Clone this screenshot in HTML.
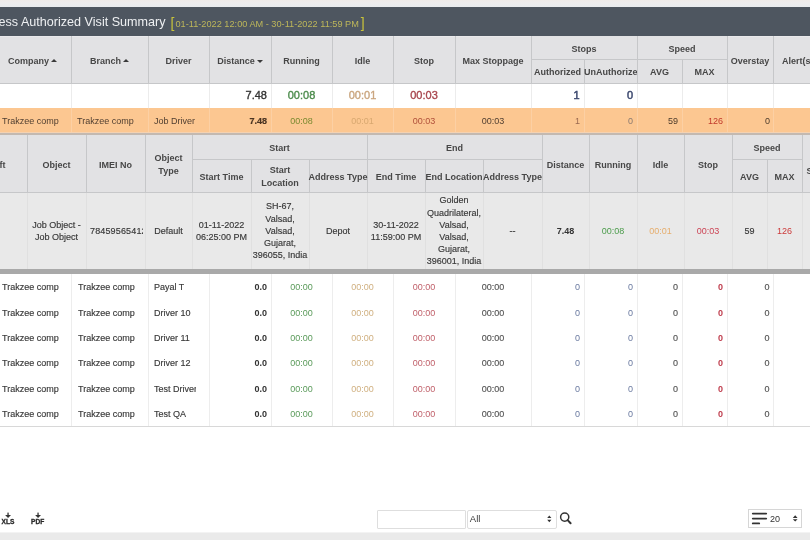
<!DOCTYPE html><html><head><meta charset="utf-8"><style>
html,body{margin:0;padding:0;width:810px;height:540px;overflow:hidden;background:#fff;position:relative}
body{font-family:"Liberation Sans",sans-serif;font-size:9px}
.c{position:absolute;display:flex;align-items:center;box-sizing:border-box;white-space:nowrap}
small{font-size:7px}
i.up,i.dn{display:inline-block;width:0;height:0;border-left:3px solid transparent;border-right:3px solid transparent;margin-left:2px;vertical-align:middle}
i.up{border-bottom:3.5px solid #3a3a3a;position:relative;top:-1px}
i.dn{border-top:3.5px solid #3a3a3a;position:relative;top:0px}
</style></head><body>
<div id="root" style="position:absolute;left:0;top:0;width:810px;height:540px;overflow:hidden;background:#fff;will-change:transform">
<div style="position:absolute;left:0;top:0;width:810px;height:7px;background:linear-gradient(#efebe9,#eeedee 40%,#e9ecef)"></div>
<div style="position:absolute;left:0px;top:7px;width:810px;height:29px;background:#4e5660"></div>
<div id="ttl" style="position:absolute;left:-33px;top:14px;white-space:nowrap;font-size:12.6px;color:#eef0f2;line-height:16px">Business <span id="A">Authorized Visit Summary</span></div>
<div style="position:absolute;left:170.6px;top:15px;white-space:nowrap;font-size:14px;color:#c7c23a;line-height:16px">[</div>
<div id="dt" style="position:absolute;left:175.5px;top:18px;white-space:nowrap;font-size:9.2px;color:#bdb65a;line-height:12px">01-11-2022 12:00 AM - 30-11-2022 11:59 PM</div>
<div style="position:absolute;left:360.8px;top:15px;white-space:nowrap;font-size:14px;color:#c7c23a;line-height:16px">]</div>
<div style="position:absolute;left:0px;top:36px;width:810px;height:47px;background:#e2e2e4"></div>
<div style="position:absolute;left:0px;top:36px;width:810px;height:1px;background:#e9e9eb"></div>
<div style="position:absolute;left:0px;top:83px;width:810px;height:1px;background:#c6c7c9"></div>
<div style="position:absolute;left:71px;top:36px;width:1px;height:48px;background:#c6c7c9"></div>
<div style="position:absolute;left:148px;top:36px;width:1px;height:48px;background:#c6c7c9"></div>
<div style="position:absolute;left:209px;top:36px;width:1px;height:48px;background:#c6c7c9"></div>
<div style="position:absolute;left:271px;top:36px;width:1px;height:48px;background:#c6c7c9"></div>
<div style="position:absolute;left:332px;top:36px;width:1px;height:48px;background:#c6c7c9"></div>
<div style="position:absolute;left:393px;top:36px;width:1px;height:48px;background:#c6c7c9"></div>
<div style="position:absolute;left:455px;top:36px;width:1px;height:48px;background:#c6c7c9"></div>
<div style="position:absolute;left:531px;top:36px;width:1px;height:48px;background:#c6c7c9"></div>
<div style="position:absolute;left:584px;top:36px;width:1px;height:48px;background:#c6c7c9"></div>
<div style="position:absolute;left:637px;top:36px;width:1px;height:48px;background:#c6c7c9"></div>
<div style="position:absolute;left:682px;top:36px;width:1px;height:48px;background:#c6c7c9"></div>
<div style="position:absolute;left:727px;top:36px;width:1px;height:48px;background:#c6c7c9"></div>
<div style="position:absolute;left:773px;top:36px;width:1px;height:48px;background:#c6c7c9"></div>
<div style="position:absolute;left:531px;top:59px;width:196px;height:1px;background:#c6c7c9"></div>
<div class="c" style="left:-6px;top:36px;width:77px;height:47px;justify-content:center;text-align:center;padding:0 0px;font-weight:bold;color:#474747;padding-top:2px;"><span>Company<i class=up></i></span></div>
<div class="c" style="left:71px;top:36px;width:77px;height:47px;justify-content:center;text-align:center;padding:0 0px;font-weight:bold;color:#474747;padding-top:2px;"><span>Branch<i class=up></i></span></div>
<div class="c" style="left:148px;top:36px;width:61px;height:47px;justify-content:center;text-align:center;padding:0 0px;font-weight:bold;color:#474747;padding-top:2px;"><span>Driver</span></div>
<div class="c" style="left:209px;top:36px;width:62px;height:47px;justify-content:center;text-align:center;padding:0 0px;font-weight:bold;color:#474747;padding-top:2px;"><span>Distance<i class=dn></i></span></div>
<div class="c" style="left:271px;top:36px;width:61px;height:47px;justify-content:center;text-align:center;padding:0 0px;font-weight:bold;color:#474747;padding-top:2px;"><span>Running</span></div>
<div class="c" style="left:332px;top:36px;width:61px;height:47px;justify-content:center;text-align:center;padding:0 0px;font-weight:bold;color:#474747;padding-top:2px;"><span>Idle</span></div>
<div class="c" style="left:393px;top:36px;width:62px;height:47px;justify-content:center;text-align:center;padding:0 0px;font-weight:bold;color:#474747;padding-top:2px;"><span>Stop</span></div>
<div class="c" style="left:455px;top:36px;width:76px;height:47px;justify-content:center;text-align:center;padding:0 0px;font-weight:bold;color:#474747;padding-top:2px;"><span>Max Stoppage</span></div>
<div class="c" style="left:531px;top:36px;width:196px;height:23px;justify-content:center;text-align:center;padding:0 0px;font-weight:bold;color:#474747;padding-top:2px;"><span></span></div>
<div class="c" style="left:531px;top:36px;width:106px;height:23px;justify-content:center;text-align:center;padding:0 0px;font-weight:bold;color:#474747;padding-top:2px;"><span>Stops</span></div>
<div class="c" style="left:637px;top:36px;width:90px;height:23px;justify-content:center;text-align:center;padding:0 0px;font-weight:bold;color:#474747;padding-top:2px;"><span>Speed</span></div>
<div class="c" style="left:531px;top:59px;width:53px;height:24px;justify-content:center;text-align:center;padding:0 0px;font-weight:bold;color:#474747;padding-top:2px;"><span>Authorized</span></div>
<div class="c" style="left:584px;top:59px;width:53px;height:24px;justify-content:flex-start;text-align:left;padding:0 0px;font-weight:bold;color:#474747;padding-top:2px;justify-content:flex-start;overflow:hidden;"><span>UnAuthorize</span></div>
<div class="c" style="left:637px;top:59px;width:45px;height:24px;justify-content:center;text-align:center;padding:0 0px;font-weight:bold;color:#474747;padding-top:2px;"><span>AVG</span></div>
<div class="c" style="left:682px;top:59px;width:45px;height:24px;justify-content:center;text-align:center;padding:0 0px;font-weight:bold;color:#474747;padding-top:2px;"><span>MAX</span></div>
<div class="c" style="left:727px;top:36px;width:46px;height:47px;justify-content:center;text-align:center;padding:0 0px;font-weight:bold;color:#474747;padding-top:2px;"><span>Overstay</span></div>
<div class="c" style="left:773px;top:36px;width:67px;height:47px;justify-content:flex-start;text-align:left;padding:0 0px;font-weight:bold;color:#474747;padding-top:2px;justify-content:flex-start;padding-left:9px"><span>Alert(s)</span></div>
<div style="position:absolute;left:532px;top:36px;width:105px;height:23px;background:#e2e2e4"></div>
<div style="position:absolute;left:638px;top:36px;width:89px;height:23px;background:#e2e2e4"></div>
<div class="c" style="left:531px;top:36px;width:106px;height:23px;justify-content:center;text-align:center;padding:0 0px;font-weight:bold;color:#474747;padding-top:2px;"><span>Stops</span></div>
<div class="c" style="left:637px;top:36px;width:90px;height:23px;justify-content:center;text-align:center;padding:0 0px;font-weight:bold;color:#474747;padding-top:2px;"><span>Speed</span></div>
<div style="position:absolute;left:0px;top:84px;width:810px;height:24px;background:#fff"></div>
<div style="position:absolute;left:71px;top:84px;width:1px;height:24px;background:#ececec"></div>
<div style="position:absolute;left:148px;top:84px;width:1px;height:24px;background:#ececec"></div>
<div style="position:absolute;left:209px;top:84px;width:1px;height:24px;background:#ececec"></div>
<div style="position:absolute;left:271px;top:84px;width:1px;height:24px;background:#ececec"></div>
<div style="position:absolute;left:332px;top:84px;width:1px;height:24px;background:#ececec"></div>
<div style="position:absolute;left:393px;top:84px;width:1px;height:24px;background:#ececec"></div>
<div style="position:absolute;left:455px;top:84px;width:1px;height:24px;background:#ececec"></div>
<div style="position:absolute;left:531px;top:84px;width:1px;height:24px;background:#ececec"></div>
<div style="position:absolute;left:584px;top:84px;width:1px;height:24px;background:#ececec"></div>
<div style="position:absolute;left:637px;top:84px;width:1px;height:24px;background:#ececec"></div>
<div style="position:absolute;left:682px;top:84px;width:1px;height:24px;background:#ececec"></div>
<div style="position:absolute;left:727px;top:84px;width:1px;height:24px;background:#ececec"></div>
<div style="position:absolute;left:773px;top:84px;width:1px;height:24px;background:#ececec"></div>
<div class="c" style="left:209px;top:84px;width:62px;height:24px;justify-content:flex-end;text-align:right;padding:0 4px;font-size:11px;padding-bottom:2.5px;-webkit-text-stroke:0.35px currentColor;color:#333;"><span>7.48</span></div>
<div class="c" style="left:271px;top:84px;width:61px;height:24px;justify-content:center;text-align:center;padding:0 0px;font-size:11px;padding-bottom:2.5px;-webkit-text-stroke:0.35px currentColor;color:#4b8b4b;"><span>00:08</span></div>
<div class="c" style="left:332px;top:84px;width:61px;height:24px;justify-content:center;text-align:center;padding:0 0px;font-size:11px;padding-bottom:2.5px;-webkit-text-stroke:0.35px currentColor;color:#caa57e;"><span>00:01</span></div>
<div class="c" style="left:393px;top:84px;width:62px;height:24px;justify-content:center;text-align:center;padding:0 0px;font-size:11px;padding-bottom:2.5px;-webkit-text-stroke:0.35px currentColor;color:#a8464e;"><span>00:03</span></div>
<div class="c" style="left:531px;top:84px;width:53px;height:24px;justify-content:flex-end;text-align:right;padding:0 4.5px;font-size:11px;padding-bottom:2.5px;-webkit-text-stroke:0.35px currentColor;color:#3e4a70;-webkit-text-stroke:0.5px currentColor;"><span>1</span></div>
<div class="c" style="left:584px;top:84px;width:53px;height:24px;justify-content:flex-end;text-align:right;padding:0 4px;font-size:11px;padding-bottom:2.5px;-webkit-text-stroke:0.35px currentColor;color:#3e4a70;-webkit-text-stroke:0.5px currentColor;"><span>0</span></div>
<div style="position:absolute;left:0px;top:108px;width:810px;height:24px;background:#fcc791"></div>
<div style="position:absolute;left:0px;top:132px;width:810px;height:1px;background:#f4d2b2"></div>
<div style="position:absolute;left:71px;top:108px;width:1px;height:24px;background:#fcd0a4"></div>
<div style="position:absolute;left:148px;top:108px;width:1px;height:24px;background:#fcd0a4"></div>
<div style="position:absolute;left:209px;top:108px;width:1px;height:24px;background:#fcd0a4"></div>
<div style="position:absolute;left:271px;top:108px;width:1px;height:24px;background:#fcd0a4"></div>
<div style="position:absolute;left:332px;top:108px;width:1px;height:24px;background:#fcd0a4"></div>
<div style="position:absolute;left:393px;top:108px;width:1px;height:24px;background:#fcd0a4"></div>
<div style="position:absolute;left:455px;top:108px;width:1px;height:24px;background:#fcd0a4"></div>
<div style="position:absolute;left:531px;top:108px;width:1px;height:24px;background:#fcd0a4"></div>
<div style="position:absolute;left:584px;top:108px;width:1px;height:24px;background:#fcd0a4"></div>
<div style="position:absolute;left:637px;top:108px;width:1px;height:24px;background:#fcd0a4"></div>
<div style="position:absolute;left:682px;top:108px;width:1px;height:24px;background:#fcd0a4"></div>
<div style="position:absolute;left:727px;top:108px;width:1px;height:24px;background:#fcd0a4"></div>
<div style="position:absolute;left:773px;top:108px;width:1px;height:24px;background:#fcd0a4"></div>
<div style="position:absolute;left:0px;top:133px;width:810px;height:2px;background:#c3b9b1"></div>
<div class="c" style="left:0px;top:108px;width:71px;height:25px;justify-content:flex-start;text-align:left;padding:0 2px;color:#4f3e30;"><span>Trakzee comp</span></div>
<div class="c" style="left:71px;top:108px;width:77px;height:25px;justify-content:flex-start;text-align:left;padding:0 6px;color:#4f3e30;"><span>Trakzee comp</span></div>
<div class="c" style="left:148px;top:108px;width:61px;height:25px;justify-content:flex-start;text-align:left;padding:0 6px;color:#4f3e30;"><span>Job Driver</span></div>
<div class="c" style="left:209px;top:108px;width:62px;height:25px;justify-content:flex-end;text-align:right;padding:0 4px;color:#4f3e30;font-weight:bold;color:#4a3422;-webkit-text-stroke:0.2px #4a3422"><span>7.48</span></div>
<div class="c" style="left:271px;top:108px;width:61px;height:25px;justify-content:center;text-align:center;padding:0 0px;color:#4f3e30;color:#7a8a30;"><span>00:08</span></div>
<div class="c" style="left:332px;top:108px;width:61px;height:25px;justify-content:center;text-align:center;padding:0 0px;color:#4f3e30;color:#d8a870;"><span>00:01</span></div>
<div class="c" style="left:393px;top:108px;width:62px;height:25px;justify-content:center;text-align:center;padding:0 0px;color:#4f3e30;color:#b0503a;"><span>00:03</span></div>
<div class="c" style="left:455px;top:108px;width:76px;height:25px;justify-content:center;text-align:center;padding:0 0px;color:#4f3e30;"><span>00:03</span></div>
<div class="c" style="left:531px;top:108px;width:53px;height:25px;justify-content:flex-end;text-align:right;padding:0 4px;color:#4f3e30;color:#9a6a50"><span>1</span></div>
<div class="c" style="left:584px;top:108px;width:53px;height:25px;justify-content:flex-end;text-align:right;padding:0 4px;color:#4f3e30;color:#8a7a70"><span>0</span></div>
<div class="c" style="left:637px;top:108px;width:45px;height:25px;justify-content:flex-end;text-align:right;padding:0 4px;color:#4f3e30;color:#4a3a2a"><span>59</span></div>
<div class="c" style="left:682px;top:108px;width:45px;height:25px;justify-content:flex-end;text-align:right;padding:0 4px;color:#4f3e30;color:#c0392b"><span>126</span></div>
<div class="c" style="left:727px;top:108px;width:46px;height:25px;justify-content:flex-end;text-align:right;padding:0 3px;color:#4f3e30;color:#4a3a2a"><span>0</span></div>
<div style="position:absolute;left:0px;top:135px;width:810px;height:57px;background:#e2e2e4"></div>
<div style="position:absolute;left:0px;top:192px;width:810px;height:1px;background:#c6c7c9"></div>
<div style="position:absolute;left:27px;top:135px;width:1px;height:58px;background:#c6c7c9"></div>
<div style="position:absolute;left:86px;top:135px;width:1px;height:58px;background:#c6c7c9"></div>
<div style="position:absolute;left:145px;top:135px;width:1px;height:58px;background:#c6c7c9"></div>
<div style="position:absolute;left:192px;top:135px;width:1px;height:58px;background:#c6c7c9"></div>
<div style="position:absolute;left:251px;top:135px;width:1px;height:58px;background:#c6c7c9"></div>
<div style="position:absolute;left:309px;top:135px;width:1px;height:58px;background:#c6c7c9"></div>
<div style="position:absolute;left:367px;top:135px;width:1px;height:58px;background:#c6c7c9"></div>
<div style="position:absolute;left:425px;top:135px;width:1px;height:58px;background:#c6c7c9"></div>
<div style="position:absolute;left:483px;top:135px;width:1px;height:58px;background:#c6c7c9"></div>
<div style="position:absolute;left:542px;top:135px;width:1px;height:58px;background:#c6c7c9"></div>
<div style="position:absolute;left:589px;top:135px;width:1px;height:58px;background:#c6c7c9"></div>
<div style="position:absolute;left:637px;top:135px;width:1px;height:58px;background:#c6c7c9"></div>
<div style="position:absolute;left:684px;top:135px;width:1px;height:58px;background:#c6c7c9"></div>
<div style="position:absolute;left:732px;top:135px;width:1px;height:58px;background:#c6c7c9"></div>
<div style="position:absolute;left:767px;top:135px;width:1px;height:58px;background:#c6c7c9"></div>
<div style="position:absolute;left:802px;top:135px;width:1px;height:58px;background:#c6c7c9"></div>
<div style="position:absolute;left:192px;top:159px;width:350px;height:1px;background:#c6c7c9"></div>
<div style="position:absolute;left:732px;top:159px;width:70px;height:1px;background:#c6c7c9"></div>
<div style="position:absolute;left:193px;top:135px;width:174px;height:24px;background:#e2e2e4"></div>
<div style="position:absolute;left:368px;top:135px;width:174px;height:24px;background:#e2e2e4"></div>
<div style="position:absolute;left:733px;top:135px;width:69px;height:24px;background:#e2e2e4"></div>
<div class="c" style="left:-36px;top:135px;width:63px;height:57px;justify-content:center;text-align:center;padding:0 0px;font-weight:bold;color:#474747;padding-top:2.5px;"><span>Shift</span></div>
<div class="c" style="left:27px;top:135px;width:59px;height:57px;justify-content:center;text-align:center;padding:0 0px;font-weight:bold;color:#474747;padding-top:2.5px;"><span>Object</span></div>
<div class="c" style="left:86px;top:135px;width:59px;height:57px;justify-content:center;text-align:center;padding:0 0px;font-weight:bold;color:#474747;padding-top:2.5px;"><span>IMEI No</span></div>
<div class="c" style="left:145px;top:135px;width:47px;height:57px;justify-content:center;text-align:center;padding:0 0px;font-weight:bold;color:#474747;padding-top:2.5px;line-height:12.3px"><span>Object<br>Type</span></div>
<div class="c" style="left:192px;top:135px;width:175px;height:24px;justify-content:center;text-align:center;padding:0 0px;font-weight:bold;color:#474747;padding-top:2.5px;"><span>Start</span></div>
<div class="c" style="left:367px;top:135px;width:175px;height:24px;justify-content:center;text-align:center;padding:0 0px;font-weight:bold;color:#474747;padding-top:2.5px;"><span>End</span></div>
<div class="c" style="left:192px;top:159px;width:59px;height:33px;justify-content:center;text-align:center;padding:0 0px;font-weight:bold;color:#474747;padding-top:2.5px;"><span>Start Time</span></div>
<div class="c" style="left:251px;top:159px;width:58px;height:33px;justify-content:center;text-align:center;padding:0 0px;font-weight:bold;color:#474747;padding-top:2.5px;line-height:12.3px"><span>Start<br>Location</span></div>
<div class="c" style="left:309px;top:159px;width:58px;height:33px;justify-content:center;text-align:center;padding:0 0px;font-weight:bold;color:#474747;padding-top:2.5px;"><span>Address Type</span></div>
<div class="c" style="left:367px;top:159px;width:58px;height:33px;justify-content:center;text-align:center;padding:0 0px;font-weight:bold;color:#474747;padding-top:2.5px;"><span>End Time</span></div>
<div class="c" style="left:425px;top:159px;width:58px;height:33px;justify-content:center;text-align:center;padding:0 0px;font-weight:bold;color:#474747;padding-top:2.5px;"><span>End Location</span></div>
<div class="c" style="left:483px;top:159px;width:59px;height:33px;justify-content:center;text-align:center;padding:0 0px;font-weight:bold;color:#474747;padding-top:2.5px;"><span>Address Type</span></div>
<div class="c" style="left:542px;top:135px;width:47px;height:57px;justify-content:center;text-align:center;padding:0 0px;font-weight:bold;color:#474747;padding-top:2.5px;"><span>Distance</span></div>
<div class="c" style="left:589px;top:135px;width:48px;height:57px;justify-content:center;text-align:center;padding:0 0px;font-weight:bold;color:#474747;padding-top:2.5px;"><span>Running</span></div>
<div class="c" style="left:637px;top:135px;width:47px;height:57px;justify-content:center;text-align:center;padding:0 0px;font-weight:bold;color:#474747;padding-top:2.5px;"><span>Idle</span></div>
<div class="c" style="left:684px;top:135px;width:48px;height:57px;justify-content:center;text-align:center;padding:0 0px;font-weight:bold;color:#474747;padding-top:2.5px;"><span>Stop</span></div>
<div class="c" style="left:732px;top:135px;width:70px;height:24px;justify-content:center;text-align:center;padding:0 0px;font-weight:bold;color:#474747;padding-top:2.5px;"><span>Speed</span></div>
<div class="c" style="left:732px;top:159px;width:35px;height:33px;justify-content:center;text-align:center;padding:0 0px;font-weight:bold;color:#474747;padding-top:2.5px;"><span>AVG</span></div>
<div class="c" style="left:767px;top:159px;width:35px;height:33px;justify-content:center;text-align:center;padding:0 0px;font-weight:bold;color:#474747;padding-top:2.5px;"><span>MAX</span></div>
<div class="c" style="left:802px;top:135px;width:58px;height:57px;justify-content:flex-start;text-align:left;padding:0 0px;font-weight:bold;color:#474747;padding-top:2.5px;justify-content:flex-start;padding-left:4.5px;padding-top:15px"><span>Sum</span></div>
<div style="position:absolute;left:0px;top:193px;width:810px;height:76px;background:#e9e9e9"></div>
<div style="position:absolute;left:27px;top:193px;width:1px;height:76px;background:#e0e0e0"></div>
<div style="position:absolute;left:86px;top:193px;width:1px;height:76px;background:#e0e0e0"></div>
<div style="position:absolute;left:145px;top:193px;width:1px;height:76px;background:#e0e0e0"></div>
<div style="position:absolute;left:192px;top:193px;width:1px;height:76px;background:#e0e0e0"></div>
<div style="position:absolute;left:251px;top:193px;width:1px;height:76px;background:#e0e0e0"></div>
<div style="position:absolute;left:309px;top:193px;width:1px;height:76px;background:#e0e0e0"></div>
<div style="position:absolute;left:367px;top:193px;width:1px;height:76px;background:#e0e0e0"></div>
<div style="position:absolute;left:425px;top:193px;width:1px;height:76px;background:#e0e0e0"></div>
<div style="position:absolute;left:483px;top:193px;width:1px;height:76px;background:#e0e0e0"></div>
<div style="position:absolute;left:542px;top:193px;width:1px;height:76px;background:#e0e0e0"></div>
<div style="position:absolute;left:589px;top:193px;width:1px;height:76px;background:#e0e0e0"></div>
<div style="position:absolute;left:637px;top:193px;width:1px;height:76px;background:#e0e0e0"></div>
<div style="position:absolute;left:684px;top:193px;width:1px;height:76px;background:#e0e0e0"></div>
<div style="position:absolute;left:732px;top:193px;width:1px;height:76px;background:#e0e0e0"></div>
<div style="position:absolute;left:767px;top:193px;width:1px;height:76px;background:#e0e0e0"></div>
<div style="position:absolute;left:802px;top:193px;width:1px;height:76px;background:#e0e0e0"></div>
<div class="c" style="left:-30px;top:193px;width:57px;height:76px;justify-content:center;text-align:center;padding:0 0px;color:#383838;line-height:12.2px;-webkit-text-stroke:0.15px currentColor;"><span></span></div>
<div class="c" style="left:27px;top:193px;width:59px;height:76px;justify-content:center;text-align:center;padding:0 0px;color:#383838;line-height:12.2px;-webkit-text-stroke:0.15px currentColor;"><span>Job Object -<br>Job Object</span></div>
<div class="c" style="left:86px;top:193px;width:59px;height:76px;justify-content:flex-start;text-align:left;padding:0 4px;color:#383838;line-height:12.2px;-webkit-text-stroke:0.15px currentColor;"><span><span style="display:inline-block;width:52.5px;overflow:hidden;letter-spacing:0.15px;vertical-align:bottom">78459565412345</span></span></div>
<div class="c" style="left:145px;top:193px;width:47px;height:76px;justify-content:center;text-align:center;padding:0 0px;color:#383838;line-height:12.2px;-webkit-text-stroke:0.15px currentColor;"><span>Default</span></div>
<div class="c" style="left:192px;top:193px;width:59px;height:76px;justify-content:center;text-align:center;padding:0 0px;color:#383838;line-height:12.2px;-webkit-text-stroke:0.15px currentColor;"><span>01-11-2022<br>06:25:00 PM</span></div>
<div class="c" style="left:251px;top:193px;width:58px;height:76px;justify-content:center;text-align:center;padding:0 0px;color:#383838;line-height:12.2px;-webkit-text-stroke:0.15px currentColor;"><span>SH-67,<br>Valsad,<br>Valsad,<br>Gujarat,<br>396055, India</span></div>
<div class="c" style="left:309px;top:193px;width:58px;height:76px;justify-content:center;text-align:center;padding:0 0px;color:#383838;line-height:12.2px;-webkit-text-stroke:0.15px currentColor;"><span>Depot</span></div>
<div class="c" style="left:367px;top:193px;width:58px;height:76px;justify-content:center;text-align:center;padding:0 0px;color:#383838;line-height:12.2px;-webkit-text-stroke:0.15px currentColor;"><span>30-11-2022<br>11:59:00 PM</span></div>
<div class="c" style="left:425px;top:193px;width:58px;height:76px;justify-content:center;text-align:center;padding:0 0px;color:#383838;line-height:12.2px;-webkit-text-stroke:0.15px currentColor;"><span>Golden<br>Quadrilateral,<br>Valsad,<br>Valsad,<br>Gujarat,<br>396001, India</span></div>
<div class="c" style="left:483px;top:193px;width:59px;height:76px;justify-content:center;text-align:center;padding:0 0px;color:#383838;line-height:12.2px;-webkit-text-stroke:0.15px currentColor;"><span>--</span></div>
<div class="c" style="left:542px;top:193px;width:47px;height:76px;justify-content:center;text-align:center;padding:0 0px;color:#383838;line-height:12.2px;-webkit-text-stroke:0.15px currentColor;font-weight:bold;color:#333;-webkit-text-stroke:0"><span>7.48</span></div>
<div class="c" style="left:589px;top:193px;width:48px;height:76px;justify-content:center;text-align:center;padding:0 0px;line-height:12.2px;color:#4c9c4c"><span>00:08</span></div>
<div class="c" style="left:637px;top:193px;width:47px;height:76px;justify-content:center;text-align:center;padding:0 0px;line-height:12.2px;color:#e6ae6e"><span>00:01</span></div>
<div class="c" style="left:684px;top:193px;width:48px;height:76px;justify-content:center;text-align:center;padding:0 0px;line-height:12.2px;color:#cc4455"><span>00:03</span></div>
<div class="c" style="left:732px;top:193px;width:35px;height:76px;justify-content:center;text-align:center;padding:0 0px;color:#383838;line-height:12.2px;-webkit-text-stroke:0.15px currentColor;"><span>59</span></div>
<div class="c" style="left:767px;top:193px;width:35px;height:76px;justify-content:center;text-align:center;padding:0 0px;line-height:12.2px;color:#cc3a3a"><span>126</span></div>
<div style="position:absolute;left:0px;top:269px;width:810px;height:5px;background:#a9a9a9"></div>
<div style="position:absolute;left:71px;top:274px;width:1px;height:152px;background:#ededed"></div>
<div style="position:absolute;left:148px;top:274px;width:1px;height:152px;background:#ededed"></div>
<div style="position:absolute;left:209px;top:274px;width:1px;height:152px;background:#ededed"></div>
<div style="position:absolute;left:271px;top:274px;width:1px;height:152px;background:#ededed"></div>
<div style="position:absolute;left:332px;top:274px;width:1px;height:152px;background:#ededed"></div>
<div style="position:absolute;left:393px;top:274px;width:1px;height:152px;background:#ededed"></div>
<div style="position:absolute;left:455px;top:274px;width:1px;height:152px;background:#ededed"></div>
<div style="position:absolute;left:531px;top:274px;width:1px;height:152px;background:#ededed"></div>
<div style="position:absolute;left:584px;top:274px;width:1px;height:152px;background:#ededed"></div>
<div style="position:absolute;left:637px;top:274px;width:1px;height:152px;background:#ededed"></div>
<div style="position:absolute;left:682px;top:274px;width:1px;height:152px;background:#ededed"></div>
<div style="position:absolute;left:727px;top:274px;width:1px;height:152px;background:#ededed"></div>
<div style="position:absolute;left:773px;top:274px;width:1px;height:152px;background:#ededed"></div>
<div class="c" style="left:0px;top:274.8px;width:71px;height:25.25px;justify-content:flex-start;text-align:left;padding:0 2px;color:#383838;line-height:12.2px;-webkit-text-stroke:0.15px currentColor;"><span>Trakzee comp</span></div>
<div class="c" style="left:71px;top:274.8px;width:77px;height:25.25px;justify-content:flex-start;text-align:left;padding:0 7px;color:#383838;line-height:12.2px;-webkit-text-stroke:0.15px currentColor;"><span><span style="display:inline-block;max-width:57.5px;overflow:hidden;vertical-align:bottom">Trakzee comp</span></span></div>
<div class="c" style="left:148px;top:274.8px;width:61px;height:25.25px;justify-content:flex-start;text-align:left;padding:0 6px;color:#383838;line-height:12.2px;-webkit-text-stroke:0.15px currentColor;"><span><span style="display:inline-block;max-width:41.5px;overflow:hidden;vertical-align:bottom">Payal T</span></span></div>
<div class="c" style="left:209px;top:274.8px;width:62px;height:25.25px;justify-content:flex-end;text-align:right;padding:0 4px;color:#383838;line-height:12.2px;-webkit-text-stroke:0.15px currentColor;font-weight:bold;color:#333;-webkit-text-stroke:0"><span>0.0</span></div>
<div class="c" style="left:271px;top:274.8px;width:61px;height:25.25px;justify-content:center;text-align:center;padding:0 0px;line-height:12.2px;color:#5a9a5a"><span>00:00</span></div>
<div class="c" style="left:332px;top:274.8px;width:61px;height:25.25px;justify-content:center;text-align:center;padding:0 0px;line-height:12.2px;color:#d0b080"><span>00:00</span></div>
<div class="c" style="left:393px;top:274.8px;width:62px;height:25.25px;justify-content:center;text-align:center;padding:0 0px;line-height:12.2px;color:#c0606a"><span>00:00</span></div>
<div class="c" style="left:455px;top:274.8px;width:76px;height:25.25px;justify-content:center;text-align:center;padding:0 0px;color:#383838;line-height:12.2px;-webkit-text-stroke:0.15px currentColor;color:#555"><span>00:00</span></div>
<div class="c" style="left:531px;top:274.8px;width:53px;height:25.25px;justify-content:flex-end;text-align:right;padding:0 4px;line-height:12.2px;color:#6a7aa0"><span>0</span></div>
<div class="c" style="left:584px;top:274.8px;width:53px;height:25.25px;justify-content:flex-end;text-align:right;padding:0 4px;line-height:12.2px;color:#6a7aa0"><span>0</span></div>
<div class="c" style="left:637px;top:274.8px;width:45px;height:25.25px;justify-content:flex-end;text-align:right;padding:0 4px;color:#383838;line-height:12.2px;-webkit-text-stroke:0.15px currentColor;color:#555"><span>0</span></div>
<div class="c" style="left:682px;top:274.8px;width:45px;height:25.25px;justify-content:flex-end;text-align:right;padding:0 4px;line-height:12.2px;color:#c04050;font-weight:bold"><span>0</span></div>
<div class="c" style="left:727px;top:274.8px;width:46px;height:25.25px;justify-content:flex-end;text-align:right;padding:0 3.5px;color:#383838;line-height:12.2px;-webkit-text-stroke:0.15px currentColor;color:#555"><span>0</span></div>
<div class="c" style="left:0px;top:300.15000000000003px;width:71px;height:25.25px;justify-content:flex-start;text-align:left;padding:0 2px;color:#383838;line-height:12.2px;-webkit-text-stroke:0.15px currentColor;"><span>Trakzee comp</span></div>
<div class="c" style="left:71px;top:300.15000000000003px;width:77px;height:25.25px;justify-content:flex-start;text-align:left;padding:0 7px;color:#383838;line-height:12.2px;-webkit-text-stroke:0.15px currentColor;"><span><span style="display:inline-block;max-width:57.5px;overflow:hidden;vertical-align:bottom">Trakzee comp</span></span></div>
<div class="c" style="left:148px;top:300.15000000000003px;width:61px;height:25.25px;justify-content:flex-start;text-align:left;padding:0 6px;color:#383838;line-height:12.2px;-webkit-text-stroke:0.15px currentColor;"><span><span style="display:inline-block;max-width:41.5px;overflow:hidden;vertical-align:bottom">Driver 10</span></span></div>
<div class="c" style="left:209px;top:300.15000000000003px;width:62px;height:25.25px;justify-content:flex-end;text-align:right;padding:0 4px;color:#383838;line-height:12.2px;-webkit-text-stroke:0.15px currentColor;font-weight:bold;color:#333;-webkit-text-stroke:0"><span>0.0</span></div>
<div class="c" style="left:271px;top:300.15000000000003px;width:61px;height:25.25px;justify-content:center;text-align:center;padding:0 0px;line-height:12.2px;color:#5a9a5a"><span>00:00</span></div>
<div class="c" style="left:332px;top:300.15000000000003px;width:61px;height:25.25px;justify-content:center;text-align:center;padding:0 0px;line-height:12.2px;color:#d0b080"><span>00:00</span></div>
<div class="c" style="left:393px;top:300.15000000000003px;width:62px;height:25.25px;justify-content:center;text-align:center;padding:0 0px;line-height:12.2px;color:#c0606a"><span>00:00</span></div>
<div class="c" style="left:455px;top:300.15000000000003px;width:76px;height:25.25px;justify-content:center;text-align:center;padding:0 0px;color:#383838;line-height:12.2px;-webkit-text-stroke:0.15px currentColor;color:#555"><span>00:00</span></div>
<div class="c" style="left:531px;top:300.15000000000003px;width:53px;height:25.25px;justify-content:flex-end;text-align:right;padding:0 4px;line-height:12.2px;color:#6a7aa0"><span>0</span></div>
<div class="c" style="left:584px;top:300.15000000000003px;width:53px;height:25.25px;justify-content:flex-end;text-align:right;padding:0 4px;line-height:12.2px;color:#6a7aa0"><span>0</span></div>
<div class="c" style="left:637px;top:300.15000000000003px;width:45px;height:25.25px;justify-content:flex-end;text-align:right;padding:0 4px;color:#383838;line-height:12.2px;-webkit-text-stroke:0.15px currentColor;color:#555"><span>0</span></div>
<div class="c" style="left:682px;top:300.15000000000003px;width:45px;height:25.25px;justify-content:flex-end;text-align:right;padding:0 4px;line-height:12.2px;color:#c04050;font-weight:bold"><span>0</span></div>
<div class="c" style="left:727px;top:300.15000000000003px;width:46px;height:25.25px;justify-content:flex-end;text-align:right;padding:0 3.5px;color:#383838;line-height:12.2px;-webkit-text-stroke:0.15px currentColor;color:#555"><span>0</span></div>
<div class="c" style="left:0px;top:325.5px;width:71px;height:25.25px;justify-content:flex-start;text-align:left;padding:0 2px;color:#383838;line-height:12.2px;-webkit-text-stroke:0.15px currentColor;"><span>Trakzee comp</span></div>
<div class="c" style="left:71px;top:325.5px;width:77px;height:25.25px;justify-content:flex-start;text-align:left;padding:0 7px;color:#383838;line-height:12.2px;-webkit-text-stroke:0.15px currentColor;"><span><span style="display:inline-block;max-width:57.5px;overflow:hidden;vertical-align:bottom">Trakzee comp</span></span></div>
<div class="c" style="left:148px;top:325.5px;width:61px;height:25.25px;justify-content:flex-start;text-align:left;padding:0 6px;color:#383838;line-height:12.2px;-webkit-text-stroke:0.15px currentColor;"><span><span style="display:inline-block;max-width:41.5px;overflow:hidden;vertical-align:bottom">Driver 11</span></span></div>
<div class="c" style="left:209px;top:325.5px;width:62px;height:25.25px;justify-content:flex-end;text-align:right;padding:0 4px;color:#383838;line-height:12.2px;-webkit-text-stroke:0.15px currentColor;font-weight:bold;color:#333;-webkit-text-stroke:0"><span>0.0</span></div>
<div class="c" style="left:271px;top:325.5px;width:61px;height:25.25px;justify-content:center;text-align:center;padding:0 0px;line-height:12.2px;color:#5a9a5a"><span>00:00</span></div>
<div class="c" style="left:332px;top:325.5px;width:61px;height:25.25px;justify-content:center;text-align:center;padding:0 0px;line-height:12.2px;color:#d0b080"><span>00:00</span></div>
<div class="c" style="left:393px;top:325.5px;width:62px;height:25.25px;justify-content:center;text-align:center;padding:0 0px;line-height:12.2px;color:#c0606a"><span>00:00</span></div>
<div class="c" style="left:455px;top:325.5px;width:76px;height:25.25px;justify-content:center;text-align:center;padding:0 0px;color:#383838;line-height:12.2px;-webkit-text-stroke:0.15px currentColor;color:#555"><span>00:00</span></div>
<div class="c" style="left:531px;top:325.5px;width:53px;height:25.25px;justify-content:flex-end;text-align:right;padding:0 4px;line-height:12.2px;color:#6a7aa0"><span>0</span></div>
<div class="c" style="left:584px;top:325.5px;width:53px;height:25.25px;justify-content:flex-end;text-align:right;padding:0 4px;line-height:12.2px;color:#6a7aa0"><span>0</span></div>
<div class="c" style="left:637px;top:325.5px;width:45px;height:25.25px;justify-content:flex-end;text-align:right;padding:0 4px;color:#383838;line-height:12.2px;-webkit-text-stroke:0.15px currentColor;color:#555"><span>0</span></div>
<div class="c" style="left:682px;top:325.5px;width:45px;height:25.25px;justify-content:flex-end;text-align:right;padding:0 4px;line-height:12.2px;color:#c04050;font-weight:bold"><span>0</span></div>
<div class="c" style="left:727px;top:325.5px;width:46px;height:25.25px;justify-content:flex-end;text-align:right;padding:0 3.5px;color:#383838;line-height:12.2px;-webkit-text-stroke:0.15px currentColor;color:#555"><span>0</span></div>
<div class="c" style="left:0px;top:350.85px;width:71px;height:25.25px;justify-content:flex-start;text-align:left;padding:0 2px;color:#383838;line-height:12.2px;-webkit-text-stroke:0.15px currentColor;"><span>Trakzee comp</span></div>
<div class="c" style="left:71px;top:350.85px;width:77px;height:25.25px;justify-content:flex-start;text-align:left;padding:0 7px;color:#383838;line-height:12.2px;-webkit-text-stroke:0.15px currentColor;"><span><span style="display:inline-block;max-width:57.5px;overflow:hidden;vertical-align:bottom">Trakzee comp</span></span></div>
<div class="c" style="left:148px;top:350.85px;width:61px;height:25.25px;justify-content:flex-start;text-align:left;padding:0 6px;color:#383838;line-height:12.2px;-webkit-text-stroke:0.15px currentColor;"><span><span style="display:inline-block;max-width:41.5px;overflow:hidden;vertical-align:bottom">Driver 12</span></span></div>
<div class="c" style="left:209px;top:350.85px;width:62px;height:25.25px;justify-content:flex-end;text-align:right;padding:0 4px;color:#383838;line-height:12.2px;-webkit-text-stroke:0.15px currentColor;font-weight:bold;color:#333;-webkit-text-stroke:0"><span>0.0</span></div>
<div class="c" style="left:271px;top:350.85px;width:61px;height:25.25px;justify-content:center;text-align:center;padding:0 0px;line-height:12.2px;color:#5a9a5a"><span>00:00</span></div>
<div class="c" style="left:332px;top:350.85px;width:61px;height:25.25px;justify-content:center;text-align:center;padding:0 0px;line-height:12.2px;color:#d0b080"><span>00:00</span></div>
<div class="c" style="left:393px;top:350.85px;width:62px;height:25.25px;justify-content:center;text-align:center;padding:0 0px;line-height:12.2px;color:#c0606a"><span>00:00</span></div>
<div class="c" style="left:455px;top:350.85px;width:76px;height:25.25px;justify-content:center;text-align:center;padding:0 0px;color:#383838;line-height:12.2px;-webkit-text-stroke:0.15px currentColor;color:#555"><span>00:00</span></div>
<div class="c" style="left:531px;top:350.85px;width:53px;height:25.25px;justify-content:flex-end;text-align:right;padding:0 4px;line-height:12.2px;color:#6a7aa0"><span>0</span></div>
<div class="c" style="left:584px;top:350.85px;width:53px;height:25.25px;justify-content:flex-end;text-align:right;padding:0 4px;line-height:12.2px;color:#6a7aa0"><span>0</span></div>
<div class="c" style="left:637px;top:350.85px;width:45px;height:25.25px;justify-content:flex-end;text-align:right;padding:0 4px;color:#383838;line-height:12.2px;-webkit-text-stroke:0.15px currentColor;color:#555"><span>0</span></div>
<div class="c" style="left:682px;top:350.85px;width:45px;height:25.25px;justify-content:flex-end;text-align:right;padding:0 4px;line-height:12.2px;color:#c04050;font-weight:bold"><span>0</span></div>
<div class="c" style="left:727px;top:350.85px;width:46px;height:25.25px;justify-content:flex-end;text-align:right;padding:0 3.5px;color:#383838;line-height:12.2px;-webkit-text-stroke:0.15px currentColor;color:#555"><span>0</span></div>
<div class="c" style="left:0px;top:376.2px;width:71px;height:25.25px;justify-content:flex-start;text-align:left;padding:0 2px;color:#383838;line-height:12.2px;-webkit-text-stroke:0.15px currentColor;"><span>Trakzee comp</span></div>
<div class="c" style="left:71px;top:376.2px;width:77px;height:25.25px;justify-content:flex-start;text-align:left;padding:0 7px;color:#383838;line-height:12.2px;-webkit-text-stroke:0.15px currentColor;"><span><span style="display:inline-block;max-width:57.5px;overflow:hidden;vertical-align:bottom">Trakzee comp</span></span></div>
<div class="c" style="left:148px;top:376.2px;width:61px;height:25.25px;justify-content:flex-start;text-align:left;padding:0 6px;color:#383838;line-height:12.2px;-webkit-text-stroke:0.15px currentColor;"><span><span style="display:inline-block;max-width:41.5px;overflow:hidden;vertical-align:bottom">Test Driver</span></span></div>
<div class="c" style="left:209px;top:376.2px;width:62px;height:25.25px;justify-content:flex-end;text-align:right;padding:0 4px;color:#383838;line-height:12.2px;-webkit-text-stroke:0.15px currentColor;font-weight:bold;color:#333;-webkit-text-stroke:0"><span>0.0</span></div>
<div class="c" style="left:271px;top:376.2px;width:61px;height:25.25px;justify-content:center;text-align:center;padding:0 0px;line-height:12.2px;color:#5a9a5a"><span>00:00</span></div>
<div class="c" style="left:332px;top:376.2px;width:61px;height:25.25px;justify-content:center;text-align:center;padding:0 0px;line-height:12.2px;color:#d0b080"><span>00:00</span></div>
<div class="c" style="left:393px;top:376.2px;width:62px;height:25.25px;justify-content:center;text-align:center;padding:0 0px;line-height:12.2px;color:#c0606a"><span>00:00</span></div>
<div class="c" style="left:455px;top:376.2px;width:76px;height:25.25px;justify-content:center;text-align:center;padding:0 0px;color:#383838;line-height:12.2px;-webkit-text-stroke:0.15px currentColor;color:#555"><span>00:00</span></div>
<div class="c" style="left:531px;top:376.2px;width:53px;height:25.25px;justify-content:flex-end;text-align:right;padding:0 4px;line-height:12.2px;color:#6a7aa0"><span>0</span></div>
<div class="c" style="left:584px;top:376.2px;width:53px;height:25.25px;justify-content:flex-end;text-align:right;padding:0 4px;line-height:12.2px;color:#6a7aa0"><span>0</span></div>
<div class="c" style="left:637px;top:376.2px;width:45px;height:25.25px;justify-content:flex-end;text-align:right;padding:0 4px;color:#383838;line-height:12.2px;-webkit-text-stroke:0.15px currentColor;color:#555"><span>0</span></div>
<div class="c" style="left:682px;top:376.2px;width:45px;height:25.25px;justify-content:flex-end;text-align:right;padding:0 4px;line-height:12.2px;color:#c04050;font-weight:bold"><span>0</span></div>
<div class="c" style="left:727px;top:376.2px;width:46px;height:25.25px;justify-content:flex-end;text-align:right;padding:0 3.5px;color:#383838;line-height:12.2px;-webkit-text-stroke:0.15px currentColor;color:#555"><span>0</span></div>
<div class="c" style="left:0px;top:401.55px;width:71px;height:25.25px;justify-content:flex-start;text-align:left;padding:0 2px;color:#383838;line-height:12.2px;-webkit-text-stroke:0.15px currentColor;"><span>Trakzee comp</span></div>
<div class="c" style="left:71px;top:401.55px;width:77px;height:25.25px;justify-content:flex-start;text-align:left;padding:0 7px;color:#383838;line-height:12.2px;-webkit-text-stroke:0.15px currentColor;"><span><span style="display:inline-block;max-width:57.5px;overflow:hidden;vertical-align:bottom">Trakzee comp</span></span></div>
<div class="c" style="left:148px;top:401.55px;width:61px;height:25.25px;justify-content:flex-start;text-align:left;padding:0 6px;color:#383838;line-height:12.2px;-webkit-text-stroke:0.15px currentColor;"><span><span style="display:inline-block;max-width:41.5px;overflow:hidden;vertical-align:bottom">Test QA</span></span></div>
<div class="c" style="left:209px;top:401.55px;width:62px;height:25.25px;justify-content:flex-end;text-align:right;padding:0 4px;color:#383838;line-height:12.2px;-webkit-text-stroke:0.15px currentColor;font-weight:bold;color:#333;-webkit-text-stroke:0"><span>0.0</span></div>
<div class="c" style="left:271px;top:401.55px;width:61px;height:25.25px;justify-content:center;text-align:center;padding:0 0px;line-height:12.2px;color:#5a9a5a"><span>00:00</span></div>
<div class="c" style="left:332px;top:401.55px;width:61px;height:25.25px;justify-content:center;text-align:center;padding:0 0px;line-height:12.2px;color:#d0b080"><span>00:00</span></div>
<div class="c" style="left:393px;top:401.55px;width:62px;height:25.25px;justify-content:center;text-align:center;padding:0 0px;line-height:12.2px;color:#c0606a"><span>00:00</span></div>
<div class="c" style="left:455px;top:401.55px;width:76px;height:25.25px;justify-content:center;text-align:center;padding:0 0px;color:#383838;line-height:12.2px;-webkit-text-stroke:0.15px currentColor;color:#555"><span>00:00</span></div>
<div class="c" style="left:531px;top:401.55px;width:53px;height:25.25px;justify-content:flex-end;text-align:right;padding:0 4px;line-height:12.2px;color:#6a7aa0"><span>0</span></div>
<div class="c" style="left:584px;top:401.55px;width:53px;height:25.25px;justify-content:flex-end;text-align:right;padding:0 4px;line-height:12.2px;color:#6a7aa0"><span>0</span></div>
<div class="c" style="left:637px;top:401.55px;width:45px;height:25.25px;justify-content:flex-end;text-align:right;padding:0 4px;color:#383838;line-height:12.2px;-webkit-text-stroke:0.15px currentColor;color:#555"><span>0</span></div>
<div class="c" style="left:682px;top:401.55px;width:45px;height:25.25px;justify-content:flex-end;text-align:right;padding:0 4px;line-height:12.2px;color:#c04050;font-weight:bold"><span>0</span></div>
<div class="c" style="left:727px;top:401.55px;width:46px;height:25.25px;justify-content:flex-end;text-align:right;padding:0 3.5px;color:#383838;line-height:12.2px;-webkit-text-stroke:0.15px currentColor;color:#555"><span>0</span></div>
<div style="position:absolute;left:0px;top:426px;width:810px;height:1px;background:#d8d8d8"></div>
<svg style="position:absolute;left:2px;top:512px" width="14" height="7" viewBox="0 0 14 7"><rect x="5.4" y="0.6" width="1.3" height="3.4" fill="#333"/><path d="M3.1 3.1 L9 3.1 L6.05 6 Z" fill="#333"/></svg>
<div style="position:absolute;left:1.5px;top:518px;font-size:6.6px;font-weight:bold;color:#2a2a2a;line-height:7px;white-space:nowrap;-webkit-text-stroke:0.3px #2a2a2a">XLS</div>
<svg style="position:absolute;left:31.5px;top:512px" width="14" height="7" viewBox="0 0 14 7"><rect x="5.4" y="0.6" width="1.3" height="3.4" fill="#333"/><path d="M3.1 3.1 L9 3.1 L6.05 6 Z" fill="#333"/></svg>
<div style="position:absolute;left:31.0px;top:518px;font-size:6.6px;font-weight:bold;color:#2a2a2a;line-height:7px;white-space:nowrap;-webkit-text-stroke:0.3px #2a2a2a">PDF</div>
<div style="position:absolute;left:377px;top:509.5px;width:89px;height:19px;border:1px solid #dedede;border-top-width:1.5px;box-sizing:border-box;background:#fff;border-radius:1px"></div>
<div style="position:absolute;left:467px;top:509.5px;width:90px;height:19px;border:1px solid #dedede;border-top-width:1.5px;box-sizing:border-box;background:#fff;border-radius:2px"></div>
<div style="position:absolute;left:469.8px;top:512.8px;font-size:9.5px;color:#3a3a3a;line-height:12px">All</div>
<svg style="position:absolute;left:546px;top:514px" width="7" height="10" viewBox="0 0 7 10"><path d="M1.2 4.1 L5.4 4.1 L3.3 1.6 Z M1.2 5.8 L5.4 5.8 L3.3 8.3 Z" fill="#333"/></svg>
<svg style="position:absolute;left:558px;top:511px" width="16" height="16" viewBox="0 0 16 16"><circle cx="6.7" cy="6.1" r="4.1" fill="none" stroke="#333" stroke-width="1.5"/><path d="M9.6 9.1 L12.6 12.2" stroke="#333" stroke-width="2" stroke-linecap="round"/></svg>
<div style="position:absolute;left:748px;top:509px;width:54px;height:19px;border:1px solid #d6d6d6;box-sizing:border-box;background:#fff"></div>
<svg style="position:absolute;left:750px;top:511px" width="20" height="15" viewBox="0 0 20 15"><g stroke="#333" stroke-width="1.8" stroke-linecap="round"><path d="M2.8 2.6 H16.2"/><path d="M2.8 7.6 H16.2"/><path d="M2.8 12.4 H9.2"/></g></svg>
<div style="position:absolute;left:770px;top:512.8px;font-size:9px;color:#333;line-height:12px">20</div>
<svg style="position:absolute;left:791px;top:514px" width="8" height="9" viewBox="0 0 8 9"><path d="M1.8 3.9 L6.6 3.9 L4.2 1.3 Z M1.8 5.3 L6.6 5.3 L4.2 7.6 Z" fill="#333"/></svg>
<div style="position:absolute;left:0px;top:532px;width:810px;height:1px;background:#f3f3f3"></div>
<div style="position:absolute;left:0px;top:533px;width:810px;height:7px;background:#eaeaea"></div>
</div>
</body></html>
